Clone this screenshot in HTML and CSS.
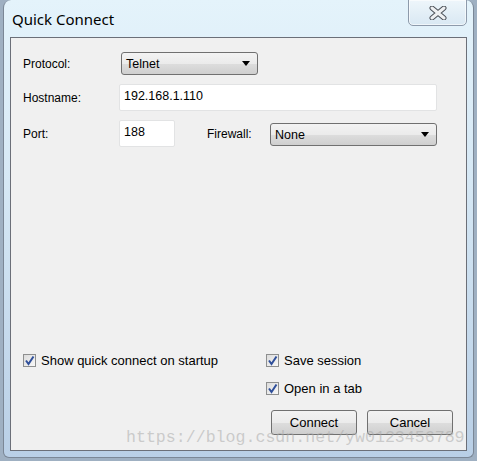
FILE: index.html
```html
<!DOCTYPE html>
<html lang="en">
<head>
    <meta charset="UTF-8">
    <title>Quick Connect</title>
    <link rel="stylesheet" href="styles.css">
</head>
<body>
    <div class="window">
        <div class="titlebar">
            <span class="title">Quick Connect</span>
            <button type="button" class="close-btn">
                <svg width="18" height="14" viewBox="0 0 18 14">
                    <path d="M3 2 L15 12 M15 2 L3 12" stroke="#4a4f57" stroke-width="5" stroke-linecap="round"/>
                    <path d="M3 2 L15 12 M15 2 L3 12" stroke="#eef0f2" stroke-width="3" stroke-linecap="round"/>
                </svg>
            </button>
        </div>

        <div class="panel">
            <div class="row">
                <label class="field-label">Protocol:</label>
                <div class="select select-protocol">
                    <span>Telnet</span>
                    <span class="arrow"></span>
                </div>
            </div>
            <div class="row row-input">
                <label class="field-label">Hostname:</label>
                <input type="text" class="text-input host" value="192.168.1.110">
            </div>
            <div class="row row-input">
                <label class="field-label">Port:</label>
                <input type="text" class="text-input port" value="188">
                <label class="firewall-label">Firewall:</label>
                <div class="select select-firewall">
                    <span>None</span>
                    <span class="arrow"></span>
                </div>
            </div>

            <div class="bottom">
                <div class="options">
                    <div class="opt-col left">
                        <label class="check">
                            <span class="box"><svg width="11" height="11" viewBox="0 0 11 11"><path d="M2 5.5 L4.5 9 L9.5 1.5" fill="none" stroke="#2f4f9a" stroke-width="2"/></svg></span>
                            Show quick connect on startup
                        </label>
                    </div>
                    <div class="opt-col">
                        <label class="check">
                            <span class="box"><svg width="11" height="11" viewBox="0 0 11 11"><path d="M2 5.5 L4.5 9 L9.5 1.5" fill="none" stroke="#2f4f9a" stroke-width="2"/></svg></span>
                            Save session
                        </label>
                        <label class="check">
                            <span class="box"><svg width="11" height="11" viewBox="0 0 11 11"><path d="M2 5.5 L4.5 9 L9.5 1.5" fill="none" stroke="#2f4f9a" stroke-width="2"/></svg></span>
                            Open in a tab
                        </label>
                    </div>
                </div>
                <div class="buttons">
                    <button type="button" class="btn">Connect</button>
                    <button type="button" class="btn">Cancel</button>
                </div>
            </div>
        </div>
        <div class="watermark">https://blog.csdn.net/yw0123456789</div>
    </div>
</body>
</html>
```

FILE: styles.css
```css
body {
    margin: 0;
    padding: 0;
    background-color: #9fb0c2;
    font-family: "Liberation Sans", Arial, sans-serif;
    font-size: 12px;
    color: #000;
    height: 461px;
    overflow: hidden;
}

.window {
    position: relative;
    margin: 0 3px;
    height: 458px;
    box-sizing: border-box;
    padding: 0 6px 6px 6px;
    border-radius: 8px 8px 6px 6px;
    border: 1px solid #7b8796;
    border-top: none;
    background: linear-gradient(to bottom, #e4f3fb 0%, #d6e8f5 40%, #b9cfe6 100%);
    display: flex;
    flex-direction: column;
}

.titlebar {
    height: 37px;
    display: flex;
    justify-content: space-between;
    align-items: flex-start;
}

.title {
    font-family: "Noto Sans", "Open Sans", sans-serif;
    font-size: 15px;
    margin-top: 9px;
    margin-left: 2px;
    color: #000;
}

.close-btn {
    width: 59px;
    height: 27px;
    margin-top: -1px;
    border: 1px solid #8d9aab;
    border-radius: 0 0 5px 5px;
    background: linear-gradient(to bottom, #eef6fb, #d9e8f3);
    box-shadow: inset 0 0 0 1px rgba(255, 255, 255, 0.6);
    display: flex;
    justify-content: center;
    align-items: center;
    padding: 0;
}

.panel {
    flex: 1;
    background-color: #f0f0f0;
    border: 1px solid #6b6f78;
    display: flex;
    flex-direction: column;
    padding: 14px 13px 15px 12px;
}

.row {
    display: flex;
    align-items: center;
    height: 23px;
}

.row-input {
    height: 27px;
    margin-top: 9px;
}

.field-label {
    width: 96px;
}

.row:first-child .field-label {
    width: 98px;
}

.select {
    box-sizing: border-box;
    height: 23px;
    border: 1px solid #707070;
    border-radius: 3px;
    background: linear-gradient(to bottom, #f3f3f3 0%, #ebebeb 50%, #dddddd 51%, #cfcfcf 100%);
    display: flex;
    align-items: center;
    justify-content: space-between;
    padding: 0 7px 0 4px;
    font-size: 12.5px;
}

.select-protocol {
    width: 137px;
}

.select-firewall {
    width: 167px;
    margin-top: 2px;
}

.arrow {
    width: 0;
    height: 0;
    border-left: 4px solid transparent;
    border-right: 4px solid transparent;
    border-top: 5px solid #000;
}

.text-input {
    box-sizing: border-box;
    height: 27px;
    border: 1px solid #e2e3e4;
    border-radius: 2px;
    background-color: #fff;
    font-family: "Liberation Sans", Arial, sans-serif;
    font-size: 12.5px;
    padding: 0 4px 4px 4px;
    margin: 0;
}

.host {
    width: 318px;
}

.port {
    width: 56px;
}

.firewall-label {
    margin-left: 32px;
    width: 63px;
    margin-top: 1px;
}

.bottom {
    margin-top: auto;
}

.options {
    display: flex;
}

.opt-col {
    display: flex;
    flex-direction: column;
    gap: 14px;
}

.opt-col.left {
    width: 243px;
}

.check {
    display: flex;
    align-items: center;
    height: 14px;
    font-size: 13px;
}

.box {
    box-sizing: border-box;
    width: 13px;
    height: 13px;
    border: 1px solid #8e8f8f;
    background: linear-gradient(to bottom right, #dcdcdc, #f8f8f8);
    margin-right: 5px;
    display: flex;
    align-items: center;
    justify-content: center;
}

.buttons {
    display: flex;
    justify-content: flex-end;
    gap: 10px;
    margin-top: 15px;
}

.btn {
    width: 86px;
    height: 25px;
    border: 1px solid #707070;
    border-radius: 3px;
    background: linear-gradient(to bottom, #f2f2f2 0%, #ebebeb 50%, #dddddd 51%, #cfcfcf 100%);
    font-family: "Liberation Sans", Arial, sans-serif;
    font-size: 13px;
    color: #000;
    padding: 0;
}

.watermark {
    position: absolute;
    left: 122px;
    top: 428px;
    font-family: "Liberation Mono", "Courier New", monospace;
    font-size: 16.6px;
    color: rgba(170, 170, 170, 0.55);
    white-space: nowrap;
}
```
